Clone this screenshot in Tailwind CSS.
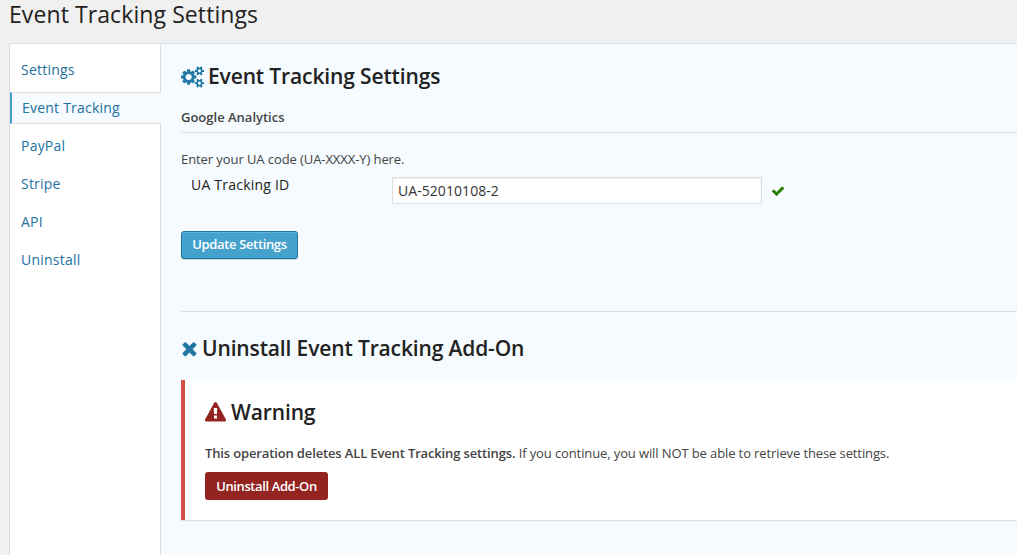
<!DOCTYPE html>
<html lang="en">
<head>
<meta charset="utf-8">
<title>Event Tracking Settings</title>
<script src="https://cdn.jsdelivr.net/npm/@tailwindcss/browser@4"></script>
</head>
<body class="h-[555px] overflow-hidden bg-[#f0f0f0] font-['Open_Sans',sans-serif] text-[13px] text-[#444]">
<div class="flex h-[555px] flex-col pl-[9px]">
  <h1 class="h-[43px] shrink-0 whitespace-nowrap text-[23px] leading-[29px] tracking-[0.09px] text-[#222]">Event Tracking Settings</h1>
  <div class="flex min-h-0 flex-1 rounded-tl-[3px] border-t border-l border-[#dfdfdf] bg-[#f5fbfe]">
    <nav class="flex w-[151px] shrink-0 flex-col text-sm tracking-[0.22px] text-[#2371a0]">
      <a class="flex h-[48px] items-center rounded-tl-[2px] border-r border-[#dfdfdf] bg-white pt-1 pl-[11px]">Settings</a>
      <a class="flex h-8 items-center border-y border-l-2 border-y-[#dfdfdf] border-l-[#45a2cc] bg-[#f5fbfe] pl-[10px]">Event Tracking</a>
      <div class="flex flex-1 flex-col border-r border-[#dfdfdf] bg-white pt-[3px] pl-[11px]">
        <a class="flex h-[38px] items-center">PayPal</a>
        <a class="flex h-[38px] items-center">Stripe</a>
        <a class="flex h-[38px] items-center">API</a>
        <a class="flex h-[38px] items-center">Uninstall</a>
      </div>
    </nav>
    <main class="min-w-0 flex-1 pl-5">
      <h2 class="flex h-16 items-center gap-[4px] text-[21px] font-semibold tracking-[-0.13px] whitespace-nowrap text-[#222]">
        <svg class="mt-[1px] h-[22px] w-[23px] shrink-0" viewBox="0 0 1920 1792" fill="#2178a3"><path d="M896 896q0-106-75-181t-181-75-181 75-75 181 75 181 181 75 181-75 75-181zm768 512q0-52-38-90t-90-38-90 38-38 90q0 53 37.500 90.500t90.500 37.500 90.500-37.500 37.500-90.500zm0-1024q0-52-38-90t-90-38-90 38-38 90q0 53 37.500 90.500t90.500 37.500 90.500-37.500 37.500-90.500zm-384 421v185q0 10-7 19.500t-16 10.500l-155 24q-11 35-32 76 34 48 90 115 7 11 7 20 0 12-7 19-23 30-82.500 89.500t-78.500 59.500q-11 0-21-7l-115-90q-37 19-77 31-11 108-23 155-7 24-30 24h-186q-11 0-20-7.500t-10-17.500l-23-153q-34-10-75-31l-118 89q-7 7-20 7-11 0-21-8-144-133-144-160 0-9 7-19 10-14 41-53t47-61q-23-44-35-82l-152-24q-10-1-17-9.500t-7-19.500v-185q0-10 7-19.500t16-10.500l155-24q11-35 32-76-34-48-90-115-7-11-7-20 0-12 7-20 22-30 82-89t79-59q11 0 21 7l115 90q34-18 77-32 11-108 23-154 7-24 30-24h186q11 0 20 7.500t10 17.500l23 153q34 10 75 31l118-89q8-7 20-7 11 0 21 8 144 133 144 160 0 8-7 19-12 16-42 54t-45 60q23 48 34 82l152 23q10 2 17 10.500t7 19.500zm640 533v140q0 16-149 31-12 27-30 52 51 113 51 138 0 4-4 7-122 71-124 71-8 0-46-47t-52-68q-20 2-30 2t-30-2q-14 21-52 68t-46 47q-2 0-124-71-4-3-4-7 0-25 51-138-18-25-30-52-149-15-149-31v-140q0-16 149-31 13-29 30-52-51-113-51-138 0-4 4-7 4-2 35-20t59-34 30-16q8 0 46 46.500t52 67.500q20-2 30-2t30 2q51-71 92-112l6-2q4 0 124 70 4 3 4 7 0 25-51 138 17 23 30 52 149 15 149 31zm0-1024v140q0 16-149 31-12 27-30 52 51 113 51 138 0 4-4 7-122 71-124 71-8 0-46-47t-52-68q-20 2-30 2t-30-2q-14 21-52 68t-46 47q-2 0-124-71-4-3-4-7 0-25 51-138-18-25-30-52-149-15-149-31v-140q0-16 149-31 13-29 30-52-51-113-51-138 0-4 4-7 4-2 35-20t59-34 30-16q8 0 46 46.500t52 67.500q20-2 30-2t30 2q51-71 92-112l6-2q4 0 124 70 4 3 4 7 0 25-51 138 17 23 30 52 149 15 149 31z"/></svg>
        <span class="pt-[2px]">Event Tracking Settings</span>
      </h2>
      <h3 class="h-[25px] border-b border-[#d9dde0] leading-[19px] font-semibold">Google Analytics</h3>
      <p class="mt-[17px] h-[19px] leading-[19px] tracking-[-0.08px]">Enter your UA code (UA-XXXX-Y) here.</p>
      <div class="mt-2 flex h-[27px] text-sm">
        <label class="w-[211px] pl-[10px] leading-[16px] tracking-[0.22px] text-[#222]">UA Tracking ID</label>
        <div class="flex w-[370px] items-center border border-[#ddd] bg-white pl-[5px] tracking-[0.06px] text-[#333] shadow-[inset_0_1px_2px_rgba(0,0,0,0.07)]">UA-52010108-2</div>
        <svg class="mt-[7px] ml-[9px] h-[14px] w-[14px]" viewBox="0 0 1792 1792" fill="#2b7f07"><path d="M1671 566q0 40-28 68l-724 724-136 136q-28 28-68 28t-68-28l-136-136-362-362q-28-28-28-68t28-68l136-136q28-28 68-28t68 28l294 295 656-657q28-28 68-28t68 28l136 136q28 28 28 68z"/></svg>
      </div>
      <button class="mt-[27px] flex h-[28px] w-[117px] justify-center rounded-[3px] border border-[#21759b] bg-[#45a2cc] text-[13px] leading-[24px] font-semibold tracking-[-0.36px] whitespace-nowrap text-white shadow-[inset_0_1px_0_rgba(120,200,230,0.5),0_1px_0_rgba(0,0,0,0.15)]">Update Settings</button>
      <div class="mt-[52px] h-[2px] border-t border-[#dfdfdf] bg-[#fbfdfe]"></div>
      <h2 class="mt-[18px] flex h-9 items-center gap-[4px] text-[21px] font-semibold tracking-[-0.14px] whitespace-nowrap text-[#222]">
        <svg class="mb-[2px] h-[21px] w-[17px] shrink-0" viewBox="203 0 1386 1792" fill="#2178a3"><path d="M1490 1322q0 40-28 68l-136 136q-28 28-68 28t-68-28l-294-294-294 294q-28 28-68 28t-68-28l-136-136q-28-28-28-68t28-68l294-294-294-294q-28-28-28-68t28-68l136-136q28-28 68-28t68 28l294 294 294-294q28-28 68-28t68 28l136 136q28 28 28 68t-28 68l-294 294 294 294q28 28 28 68z"/></svg>
        <span>Uninstall Event Tracking Add-On</span>
      </h2>
      <section class="mt-[13px] h-[140px] border-l-4 border-[#d54e45] bg-white pl-5 shadow-[0_1px_1px_rgba(0,0,0,0.1)]">
        <h2 class="flex h-16 items-center gap-[5px] text-[21px] font-semibold tracking-[-0.13px] text-[#222]">
          <svg class="h-[21px] w-[21px] shrink-0" viewBox="0 0 1792 1792" fill="#942420"><path d="M1024 1375v-190q0-14-9.500-23.500t-22.500-9.500h-192q-13 0-22.500 9.500t-9.500 23.500v190q0 14 9.500 23.500t22.500 9.500h192q13 0 22.500-9.500t9.500-23.500zm-2-374l18-459q0-12-10-19-13-11-24-11h-220q-11 0-24 11-10 7-10 21l17 457q0 10 10 16.500t24 6.500h185q14 0 23.500-6.500t10.500-16.500zm-14-934l768 1408q35 63-2 126-17 29-46.500 46t-63.500 17h-1536q-34 0-63.500-17t-46.500-46q-37-63-2-126l768-1408q17-31 47-49t65-18 65 18 47 49z"/></svg>
          <span class="pt-[2px]">Warning</span>
        </h2>
        <p class="h-7 leading-[19px] tracking-[-0.11px] whitespace-nowrap"><strong class="font-semibold tracking-[-0.14px]">This operation deletes ALL Event Tracking settings.</strong> If you continue, you will NOT be able to retrieve these settings.</p>
        <button class="block h-[28px] w-[123px] rounded-[3px] bg-[#942420] text-[13px] leading-[28px] font-semibold tracking-[-0.4px] whitespace-nowrap text-white">Uninstall Add-On</button>
      </section>
    </main>
  </div>
</div>
</body>
</html>
